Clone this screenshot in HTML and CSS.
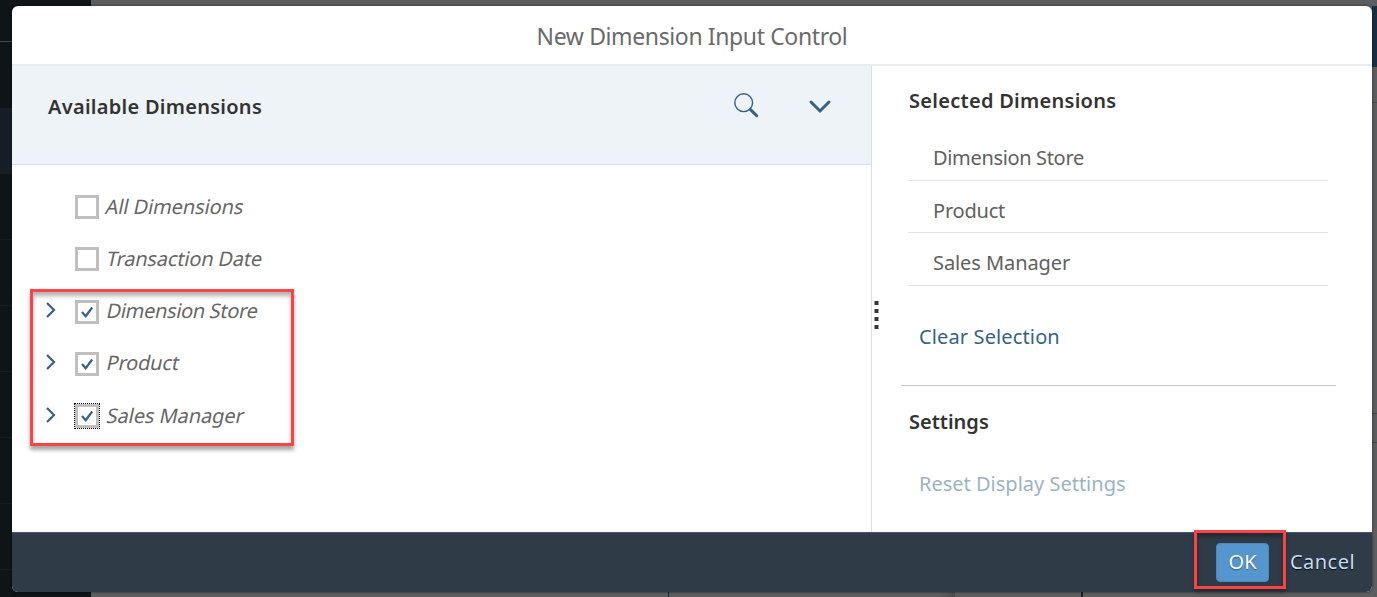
FILE: index.html
```html
<!DOCTYPE html>
<html lang="en">
<head>
<meta charset="utf-8">
<title>New Dimension Input Control</title>
<link rel="stylesheet" href="styles.css">
</head>
<body>
<main class="dialog">
  <header class="dialog-header"><h1 class="title">New Dimension Input Control</h1></header>
  <div class="content">
    <section class="available">
      <div class="toolbar">
        <h2 class="heading available-heading">Available Dimensions</h2>
        <svg class="search" width="26" height="26" viewBox="0 0 26 26"><circle cx="10.7" cy="10.7" r="8.9"/><path class="handle" d="M17.5 17.6L23.7 23.7"/></svg>
        <svg class="expand" width="24" height="16" viewBox="0 0 24 16"><path d="M3 3L12 12L21 3"/></svg>
      </div>
      <ul class="tree">
        <li class="row"><span class="arrow"></span><span class="check"></span><span class="name all">All Dimensions</span></li>
        <li class="row"><span class="arrow"></span><span class="check"></span><span class="name date">Transaction Date</span></li>
        <li class="row"><span class="arrow"><svg width="12" height="18" viewBox="0 0 12 18"><path d="M2 2L9 9L2 16"/></svg></span><span class="check"><svg width="14" height="14" viewBox="0 0 14 14"><path d="M2 7L5.7 11.2L12.2 2.5"/></svg></span><span class="name store">Dimension Store</span></li>
        <li class="row"><span class="arrow"><svg width="12" height="18" viewBox="0 0 12 18"><path d="M2 2L9 9L2 16"/></svg></span><span class="check"><svg width="14" height="14" viewBox="0 0 14 14"><path d="M2 7L5.7 11.2L12.2 2.5"/></svg></span><span class="name product">Product</span></li>
        <li class="row"><span class="arrow"><svg width="12" height="18" viewBox="0 0 12 18"><path d="M2 2L9 9L2 16"/></svg></span><span class="check focused"><svg width="14" height="14" viewBox="0 0 14 14"><path d="M2 7L5.7 11.2L12.2 2.5"/></svg></span><span class="name manager">Sales Manager</span></li>
      </ul>
      <div class="callout callout-tree"></div>
    </section>
    <aside class="selected">
      <h2 class="heading selected-heading">Selected Dimensions</h2>
      <ul class="chosen">
        <li class="chosen-item"><span class="store">Dimension Store</span></li>
        <li class="chosen-item"><span class="product">Product</span></li>
        <li class="chosen-item"><span class="manager">Sales Manager</span></li>
      </ul>
      <div class="clear-row"><a class="link clear">Clear Selection</a></div>
      <h2 class="heading settings-heading">Settings</h2>
      <a class="link reset">Reset Display Settings</a>
      <div class="grip"><i></i><i></i><i></i><i></i></div>
    </aside>
  </div>
  <footer class="footer">
    <button class="ok">OK</button>
    <button class="cancel">Cancel</button>
    <div class="callout callout-ok"></div>
  </footer>
</main>
</body>
</html>
```
FILE: styles.css
```css
* { box-sizing: border-box; }
body {
  margin: 0;
  height: 597px;
  padding: 6px 5px 5px 12px;
  overflow: hidden;
  font-family: "Noto Sans", "Open Sans", sans-serif;
  font-size: 20px;
  color: #666;
  background:
    linear-gradient(#4a4d4f, #4a4d4f) 0 41px / 12px 1px no-repeat,
    linear-gradient(#151e26, #151e26) 0 108px / 12px 66px no-repeat,
    linear-gradient(#182f42, #182f42) 1372px 6px / 5px 61px no-repeat,
    linear-gradient(#454545, #454545) 1372px 102px / 5px 1px no-repeat,
    linear-gradient(#454545, #454545) 1372px 413px / 5px 1px no-repeat,
    linear-gradient(#454545, #454545) 1372px 442px / 5px 1px no-repeat,
    linear-gradient(#15283a, #15283a) 668px 592px / 1px 5px no-repeat,
    linear-gradient(#1b2128, #1b2128) 1081px 592px / 2px 5px no-repeat,
    linear-gradient(90deg, transparent, #4c4d4e) 940px 592px / 15px 5px no-repeat,
    repeating-linear-gradient(transparent 0 41px, #171c1f 41px 42px, transparent 42px 66px) 0 198px / 12px 399px no-repeat,
    linear-gradient(#0f1417, #0f1417) 0 0 / 91px 597px no-repeat,
    #5c5d5e;
}
h1, h2, ul { margin: 0; padding: 0; list-style: none; }
.dialog {
  height: 586px;
  display: flex;
  flex-direction: column;
  border-radius: 6px;
  background: #fff;
  box-shadow: 0 0 3px rgba(0,0,0,.55);
}
.dialog-header {
  height: 60px;
  border-bottom: 2px solid #ebeced;
  text-align: center;
}
.title { font-size: 23px; line-height: 61px; font-weight: 400; color: #6a6a6a; white-space: nowrap; letter-spacing: -.38px; }
.content { height: 466px; display: flex; }
.available { position: relative; width: 860px; border-right: 1px solid #dedede; }
.toolbar {
  height: 99px;
  display: flex;
  padding: 0 39px 0 36px;
  background: #eef3f7;
  border-bottom: 1px solid #cfdff0;
}
.heading { font-size: 20px; line-height: 28px; font-weight: 600; color: #333; white-space: nowrap; }
.available-heading { flex: 1; padding-top: 27px; letter-spacing: .27px; }
svg { display: block; fill: none; stroke: #346187; stroke-width: 2.2; }
.search { margin: 26px 49px 0 0; stroke-width: 1.4; }
.handle { stroke-width: 3; stroke-linecap: round; }
.expand { margin-top: 33px; stroke-width: 3; stroke-linecap: round; }
.tree { padding: 16px 0 0 33px; }
.row { height: 52.25px; display: flex; align-items: center; }
.arrow { width: 30px; margin-top: -3px; }
.check {
  width: 24px;
  height: 24px;
  border: 3px solid #bfbfbf;
  padding: 2px;
}
.focused { outline: 1px dotted #000; }
.name {
  margin-left: 8px;
  line-height: 28px;
  margin-top: -1px;
  white-space: nowrap;
  transform: skewX(-12deg);
}
.all { margin-left: 7px; letter-spacing: -.1px; }
.date { letter-spacing: -.18px; }
.store { letter-spacing: -.34px; }
.product { letter-spacing: -.2px; }
.manager { letter-spacing: -.08px; }
.callout { position: absolute; border: 3px solid #fc4343; pointer-events: none; }
.callout-tree {
  left: 18px; top: 223px; width: 264px; height: 157px;
  box-shadow: 0 4px 4px rgba(0,0,0,.35), inset 0 4px 4px rgba(0,0,0,.3);
}
.selected { position: relative; flex: 1; padding: 21px 36px 0 29px; }
.selected-heading { padding-left: 8px; letter-spacing: .28px; }
.chosen { padding: 13px 8px 0 7px; }
.chosen-item {
  height: 52.5px;
  padding: 16px 0 0 25px;
  line-height: 28px;
  border-bottom: 1px solid #e3e3e3;
  color: #606060;
}
.clear-row { height: 100px; padding: 37px 0 0 18px; border-bottom: 1px solid #c5c5c5; }
.link { line-height: 28px; color: #346187; white-space: nowrap; display: inline-block; }
.clear { letter-spacing: .13px; }
.settings-heading { padding: 22px 0 0 8px; }
.reset { margin: 34px 0 0 18px; color: #9cb2c6; }
.grip { position: absolute; left: 2px; top: 235px; width: 5px; display: grid; gap: 4px; }
.grip i { height: 4px; background: #333; border: solid #999; border-width: 0 1px; }
.footer {
  position: relative;
  height: 60px;
  display: flex;
  align-items: center;
  justify-content: flex-end;
  padding-right: 17px;
  background: #2f3c48;
  border-top: 1px solid #42586e;
  border-radius: 0 0 6px 6px;
}
button { font: inherit; padding: 0 0 2px; height: 39px; }
.ok {
  width: 53px;
  margin-right: 21px;
  border: 1px solid #4a88c2;
  border-radius: 4px;
  background: #5496cd;
  color: #fff;
  text-shadow: 0 1px 1px rgba(0,0,0,.4);
}
.cancel { border: 0; background: none; color: #c5def5; text-shadow: 0 1px 1px #000; letter-spacing: .45px; }
.callout-ok {
  left: 1182px; top: -3px; width: 92px; height: 59px;
  box-shadow: 0 3px 4px rgba(0,0,0,.3), inset 0 4px 4px rgba(0,0,0,.3);
}
```
